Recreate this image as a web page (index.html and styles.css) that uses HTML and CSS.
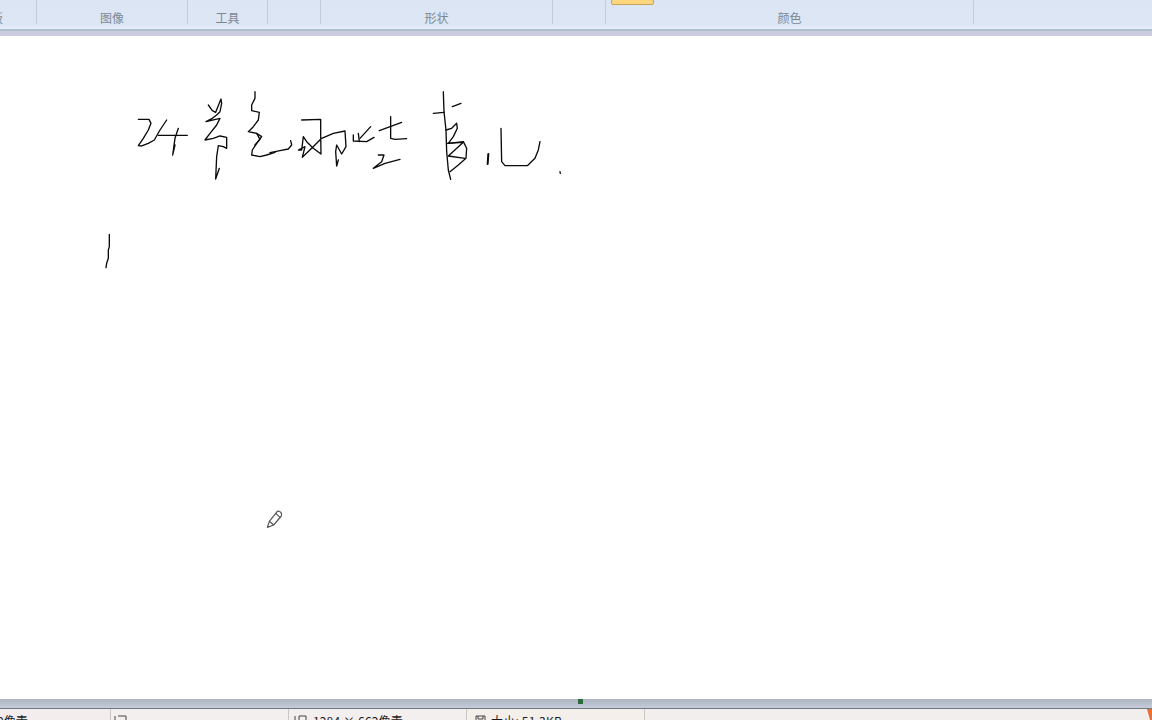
FILE: index.html
```html
<!DOCTYPE html>
<html lang="zh-CN">
<head>
<meta charset="utf-8">
<title>画图</title>
<link rel="stylesheet" href="styles.css">
</head>
<body>
<div class="app">
  <header class="ribbon">
    <div class="groups">
      <section class="group g-first"><span>板</span></section>
      <section class="group g-image"><span>图像</span></section>
      <section class="group g-tools"><span>工具</span></section>
      <section class="group g-brush"></section>
      <section class="group g-shapes"><span>形状</span></section>
      <section class="group g-size"></section>
      <section class="group g-colors"><i class="color-btn"></i><span>颜色</span></section>
    </div>
  </header>
  <div class="ribbon-band"></div>
  <main class="canvas">
    <svg class="drawing" viewBox="0 0 1152 663" width="1152" height="663" aria-label="手写内容">
      <g transform="translate(0 -36)">
        <g class="ink" transform="translate(125 80) scale(.3333)">
          <polyline points="40,118 72,118 78,130 70,150 55,175 40,197 50,198 70,190 88,180 105,150 125,120"/>
          <polyline points="100,166 187,166"/>
          <polyline points="160,145 150,175 143,225 150,195"/>
          <polyline points="250,75 262,92 272,97 288,57 290,70 285,95 275,105 262,115 243,125 285,115 275,135 255,160 240,180 265,175 285,168 305,172 305,205 295,200 280,197 275,230 272,297 283,265"/>
          <polyline points="390,35 390,55 380,75 380,92 403,97 400,120 385,140 370,155 395,160 410,170 395,190 382,210 380,225 405,230 425,225 450,217"/>
          <polyline points="395,160 405,178 390,195"/>
        </g>
        <g class="ink" transform="translate(270 80) scale(.3333)">
          <polyline points="0,218 30,212 55,207 65,195 62,182"/>
          <polyline points="95,120 152,118 152,160 153,222 130,205 110,185 100,170 95,210 85,210 105,200 97,232 125,205 155,175 190,160 225,153 228,200 215,222 200,195 197,215 200,258 205,240"/>
          <polyline points="265,160 268,185"/>
          <polyline points="302,140 270,175"/>
          <polyline points="250,165 250,183 290,185 312,172"/>
          <polyline points="328,152 395,127"/>
          <polyline points="362,110 362,175 375,178 410,176"/>
          <polyline points="325,225 342,225 335,245 310,265 345,250 390,238"/>
        </g>
        <g class="ink" transform="translate(420 80) scale(.3333)">
          <polyline points="70,35 72,95 78,150 80,215 85,270 92,298"/>
          <polyline points="40,100 72,97"/>
          <polyline points="97,80 123,70"/>
          <polyline points="78,150 95,145 110,130 112,145 100,170 85,190 130,185 140,205 138,235 115,255 90,275"/>
          <polyline points="80,190 130,187 85,228 135,235"/>
          <polyline class="heavy" points="205,222 203,252"/>
          <polyline points="243,145 245,245 255,257 322,257 345,235 355,210 360,185"/>
          <polyline points="420,275 421,280"/>
        </g>
        <g class="ink" transform="translate(90 225) scale(.3333)">
          <polyline points="58,28 58,65 55,75 55,100 50,115 48,128"/>
        </g>
        <g class="pencil" transform="translate(260 504) scale(.3333)">
          <path d="M22 70 L28 52 L52 22 Q58 20 63 26 Q67 32 64 36 L41 63 Z"/>
          <path d="M47 28 L60 40 M28 52 L41 63"/>
        </g>
      </g>
    </svg>
  </main>
  <div class="status-band"><i class="grip"></i></div>
  <footer class="status">
    <div class="cell c-pos"><span class="pos-text">0像素</span></div>
    <div class="cell c-sel">
      <svg class="ico" viewBox="0 0 14 10" width="14" height="10"><path d="M1 1v8M4 1h8v8" /></svg>
    </div>
    <div class="cell c-dim">
      <svg class="ico" viewBox="0 0 14 10" width="14" height="10"><path d="M1 1v8M5 1h7v8H5z" /></svg>
      <span>1284 × 662像素</span>
    </div>
    <div class="cell c-size">
      <svg class="ico" viewBox="0 0 14 10" width="14" height="10"><path d="M2 1h9v8H2zM4 1v3h5V1" /></svg>
      <span>大小: 51.3KB</span>
    </div>
    <div class="cell c-rest"></div>
    <i class="corner"></i>
  </footer>
</div>
</body>
</html>
```

FILE: styles.css
```css
* { box-sizing: border-box; }
html, body { margin: 0; height: 100%; overflow: hidden; background: #fff; }
body { font-family: "Noto Sans CJK SC", "Liberation Sans", sans-serif; }

.app { width: 1152px; height: 720px; display: flex; flex-direction: column; overflow: hidden; }

.ribbon {
  height: 31px;
  flex: none;
  background: linear-gradient(#dbe5f3 0, #dce6f4 24px, #e6eef9 29px);
  border-bottom: 2px solid #b1c0cd;
}
.groups { display: flex; height: 24px; margin-left: -42px; }
.group {
  flex: none;
  position: relative;
  padding-top: 10px;
  border-right: 1px solid #c2ccd9;
  text-align: center;
  font-size: 12px;
  line-height: 15px;
  color: #7d8894;
}
.g-first { width: 79px; }
.g-image { width: 151px; }
.g-tools { width: 80px; }
.g-brush { width: 53px; }
.g-shapes { width: 232px; }
.g-size { width: 53px; }
.g-colors { width: 368px; }

.color-btn {
  position: absolute;
  left: 5px;
  top: -1px;
  width: 43px;
  height: 6px;
  background: #fdd67d;
  border: 1px solid #c8a45a;
  border-radius: 2px;
}

.ribbon-band { height: 5px; flex: none; background: #cccce0; }

.canvas { flex: none; height: 663px; background: #fff; }
.drawing { display: block; }
.ink polyline {
  fill: none;
  stroke: #0a0a0a;
  stroke-width: 4;
  stroke-linejoin: round;
  stroke-linecap: round;
}
.ink .heavy { stroke-width: 6; }
.pencil path {
  fill: #fff;
  stroke: #555;
  stroke-width: 3.6;
  stroke-linejoin: round;
}

.status-band {
  position: relative;
  height: 10px;
  flex: none;
  background: linear-gradient(#aeb3c3, #c6cbd9);
  border-bottom: 1px solid #6f7a80;
}
.grip {
  position: absolute;
  left: 578px;
  top: 0;
  width: 5px;
  height: 5px;
  background: #2d6a3c;
}

.status {
  position: relative;
  flex: none;
  height: 11px;
  display: flex;
  overflow: hidden;
  background: #f1eeed;
  font-size: 12px;
  line-height: 14px;
  color: #1c1c1c;
}
.cell {
  flex: none;
  display: flex;
  align-items: flex-start;
  gap: 5px;
  padding-top: 5px;
  border-right: 1px solid #c9c6c6;
}
.c-pos { width: 111px; background: #f3eded; }
.pos-text { margin-left: -3px; }
.c-sel { width: 178px; padding-left: 3px; background: #f4efef; }
.c-dim { width: 178px; padding-left: 5px; letter-spacing: .15px; background: #f4efef; }
.c-size { width: 178px; padding-left: 7px; gap: 3px; letter-spacing: .2px; background: #f5efec; }
.c-rest { flex: 1; border-right: 0; }
.ico { flex: none; margin-top: 1px; }
.ico path { fill: none; stroke: #444; stroke-width: 1; }
.corner {
  position: absolute;
  right: 0;
  top: 0;
  width: 5px;
  height: 11px;
  background: #e8703a;
  clip-path: polygon(0 0, 100% 0, 100% 100%, 60% 100%);
}
```
